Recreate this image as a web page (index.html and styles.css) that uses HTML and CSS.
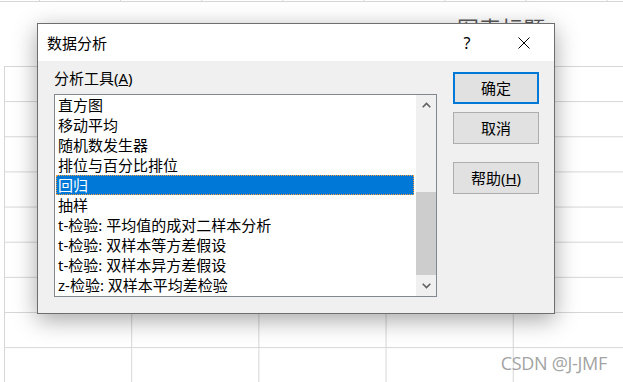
FILE: index.html
```html
<!DOCTYPE html>
<html lang="zh-CN">
<head>
  <meta charset="UTF-8">
  <title>数据分析</title>
  <link rel="stylesheet" href="styles.css">
</head>
<body>

<div class="sheet">
  <div class="ruler"></div>
  <div class="chart"><span class="chart-title">图表标题</span></div>
  <div class="grid"></div>
</div>

<div class="dialog">
  <div class="titlebar">
    <span class="title">数据分析</span>
    <span class="help">?</span>
    <svg class="close" width="12" height="12" viewBox="0 0 12 12">
      <path d="M0.5 0.5 L11.5 11.5 M11.5 0.5 L0.5 11.5" stroke="#000" stroke-width="1" fill="none"/>
    </svg>
  </div>

  <div class="body">
    <div class="tools">
      <div class="label">分析工具(<u>A</u>)</div>
      <div class="listbox">
        <ul class="items">
          <li>直方图</li>
          <li>移动平均</li>
          <li>随机数发生器</li>
          <li>排位与百分比排位</li>
          <li class="selected">回归</li>
          <li>抽样</li>
          <li>t-检验: 平均值的成对二样本分析</li>
          <li>t-检验: 双样本等方差假设</li>
          <li>t-检验: 双样本异方差假设</li>
          <li>z-检验: 双样本平均差检验</li>
        </ul>
        <div class="scrollbar">
          <div class="arrow">
            <svg width="9" height="6" viewBox="0 0 9 6"><path d="M0.7 5.2 L4.5 1.4 L8.3 5.2" stroke="#606060" stroke-width="1.6" fill="none"/></svg>
          </div>
          <div class="track"><div class="thumb"></div></div>
          <div class="arrow">
            <svg width="9" height="6" viewBox="0 0 9 6"><path d="M0.7 0.8 L4.5 4.6 L8.3 0.8" stroke="#606060" stroke-width="1.6" fill="none"/></svg>
          </div>
        </div>
      </div>
    </div>

    <div class="buttons">
      <button class="btn default">确定</button>
      <button class="btn">取消</button>
      <button class="btn help-btn">帮助(<u>H</u>)</button>
    </div>
  </div>
</div>

<div class="watermark">CSDN @J-JMF</div>

</body>
</html>
```

FILE: styles.css
```css
* {
  box-sizing: border-box;
}
body {
  margin: 0;
  width: 623px;
  height: 382px;
  overflow: hidden;
  position: relative;
  background: #fff;
  font-family: "Noto Sans", "Noto Sans CJK SC", sans-serif;
  color: #000;
}

/* worksheet behind the dialog */
.ruler {
  height: 2px;
  border-bottom: 1px solid #d6d6d6;
  background: linear-gradient(to right, #d6d6d6 1px, transparent 1px) 39px 0 / 81.1px 1px repeat-x;
}
.chart {
  height: 64px;
  padding: 14px 0 0 457px;
}
.chart-title {
  font-family: "Noto Sans CJK SC", sans-serif;
  font-size: 22px;
  line-height: 22px;
  color: #595959;
}
.grid {
  margin-left: 4px;
  height: 316px;
  background-image:
    linear-gradient(to right, #d6d6d6 1px, transparent 1px),
    linear-gradient(to bottom, #d6d6d6 1px, transparent 1px);
  background-size: 127.2px 100%, 100% 35.15px;
}

/* dialog */
.dialog {
  position: absolute;
  left: 37px;
  top: 23px;
  width: 518px;
  height: 291px;
  border: 1px solid #6e6e6e;
  background: #f0f0f0;
  box-shadow: 0 6px 22px rgba(0,0,0,0.35);
  display: flex;
  flex-direction: column;
}
.titlebar {
  height: 37px;
  background: #fff;
  display: flex;
  align-items: center;
  padding-left: 9px;
}
.title {
  flex: 1;
  font-size: 15px;
  line-height: 20px;
}
.help {
  width: 20px;
  text-align: center;
  font-size: 16px;
  line-height: 20px;
  margin-right: 41px;
}
.close {
  margin-right: 24px;
}

.body {
  flex: 1;
  display: flex;
  gap: 16px;
  padding: 7px 15px 0 16px;
}
.tools {
  width: 383px;
}
.label {
  font-size: 15px;
  line-height: 20px;
}
.listbox {
  margin-top: 6px;
  height: 203px;
  border: 1px solid #828790;
  background: #fff;
  display: flex;
}
.items {
  list-style: none;
  margin: 0;
  padding: 0;
  flex: 1;
}
.items li {
  height: 20px;
  line-height: 20px;
  padding-left: 3px;
  font-size: 15px;
  white-space: nowrap;
}
.items li.selected {
  background: #0078d7;
  color: #fff;
  margin: 0 2px 0 1px;
  padding-left: 2px;
  outline: 1px dotted #f59d3d;
  outline-offset: -1px;
}
.scrollbar {
  width: 20px;
  background: #f0f0f0;
  display: flex;
  flex-direction: column;
}
.arrow {
  height: 20px;
  display: flex;
  align-items: center;
  justify-content: center;
}
.track {
  flex: 1;
  padding-top: 77px;
}
.thumb {
  height: 83px;
  background: #cdcdcd;
}

.buttons {
  width: 86px;
  padding-top: 4px;
  display: flex;
  flex-direction: column;
}
.btn {
  height: 32px;
  margin: 0 0 8px;
  padding: 0;
  background: #e1e1e1;
  border: 1px solid #adadad;
  font-family: "Noto Sans", "Noto Sans CJK SC", sans-serif;
  font-size: 15px;
  line-height: 20px;
  color: #000;
}
.btn.default {
  border: 2px solid #0078d7;
}
.help-btn {
  margin-top: 10px;
}

.watermark {
  position: absolute;
  right: 16px;
  top: 351px;
  font-family: "Open Sans", sans-serif;
  font-size: 18px;
  line-height: 24px;
  letter-spacing: -0.3px;
  color: #a3a3a3;
}
```
